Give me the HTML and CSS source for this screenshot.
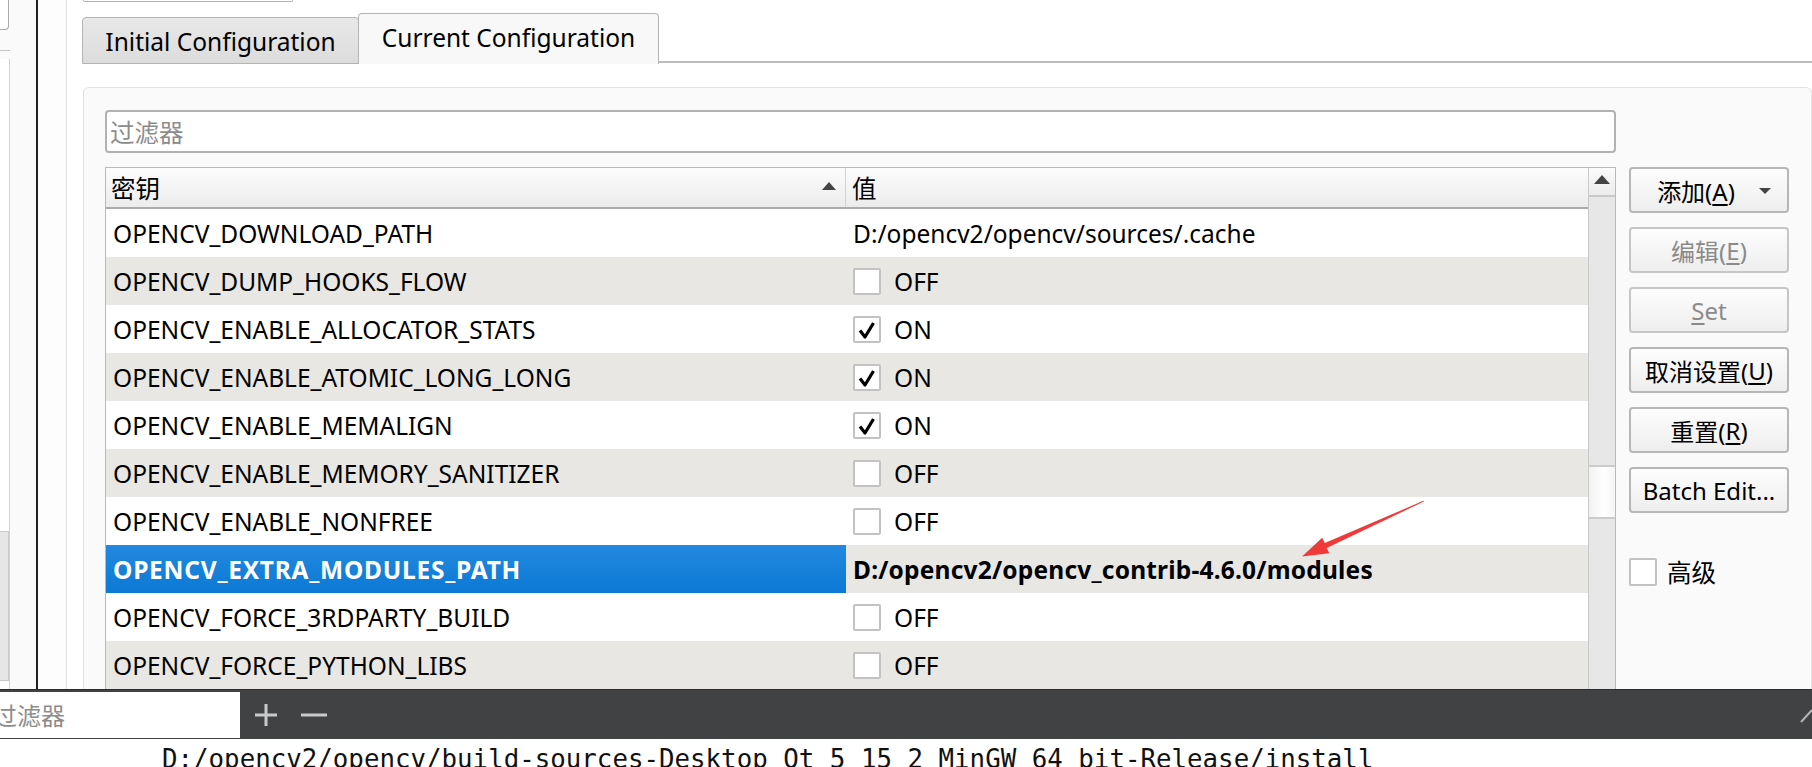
FILE: index.html
```html
<!DOCTYPE html>
<html lang="zh">
<head>
<meta charset="utf-8">
<title>CMake Configuration</title>
<link rel="stylesheet" href="styles.css">
</head>
<body>
<div class="main">
  <aside class="side">
    <div class="side-top"></div>
    <div class="side-sep"></div>
    <div class="side-list"><div class="side-block"></div></div>
  </aside>
  <div class="gutter"></div>
  <section class="content">
    <div class="topbox"></div>
    <div class="tabs">
      <div class="tab inactive">Initial Configuration</div>
      <div class="tab active">Current Configuration</div>
      <div class="tab-fill"></div>
    </div>
    <div class="panel">
      <div class="filter">过滤器</div>
      <div class="spacer"></div>
      <div class="table">
        <div class="grid">
          <div class="thead">
            <div class="th key"><span>密钥</span><svg class="sort" width="14" height="8" viewBox="0 0 14 8"><path d="M0 8 L7 0 L14 8 Z" fill="#444"/></svg></div>
            <div class="th val">值</div>
          </div>
          <div class="row"><div class="k">OPENCV_DOWNLOAD_PATH</div><div class="v">D:/opencv2/opencv/sources/.cache</div></div>
          <div class="row alt"><div class="k">OPENCV_DUMP_HOOKS_FLOW</div><div class="v"><span class="cb"></span>OFF</div></div>
          <div class="row"><div class="k">OPENCV_ENABLE_ALLOCATOR_STATS</div><div class="v"><span class="cb"><svg width="24" height="23" viewBox="0 0 24 23"><path d="M5 12.5 L10 19 L18.5 5" fill="none" stroke="#000" stroke-width="3.2" stroke-linejoin="round"/></svg></span>ON</div></div>
          <div class="row alt"><div class="k">OPENCV_ENABLE_ATOMIC_LONG_LONG</div><div class="v"><span class="cb"><svg width="24" height="23" viewBox="0 0 24 23"><path d="M5 12.5 L10 19 L18.5 5" fill="none" stroke="#000" stroke-width="3.2" stroke-linejoin="round"/></svg></span>ON</div></div>
          <div class="row"><div class="k">OPENCV_ENABLE_MEMALIGN</div><div class="v"><span class="cb"><svg width="24" height="23" viewBox="0 0 24 23"><path d="M5 12.5 L10 19 L18.5 5" fill="none" stroke="#000" stroke-width="3.2" stroke-linejoin="round"/></svg></span>ON</div></div>
          <div class="row alt"><div class="k">OPENCV_ENABLE_MEMORY_SANITIZER</div><div class="v"><span class="cb"></span>OFF</div></div>
          <div class="row"><div class="k">OPENCV_ENABLE_NONFREE</div><div class="v"><span class="cb"></span>OFF</div></div>
          <div class="row alt sel"><div class="k">OPENCV_EXTRA_MODULES_PATH</div><div class="v">D:/opencv2/opencv_contrib-4.6.0/modules</div></div>
          <div class="row"><div class="k">OPENCV_FORCE_3RDPARTY_BUILD</div><div class="v"><span class="cb"></span>OFF</div></div>
          <div class="row alt"><div class="k">OPENCV_FORCE_PYTHON_LIBS</div><div class="v"><span class="cb"></span>OFF</div></div>
        </div>
        <div class="vscroll">
          <div class="vs-up"><svg width="16" height="9" viewBox="0 0 16 9"><path d="M0 9 L8 0 L16 9 Z" fill="#444"/></svg></div>
          <div class="vs-thumb"></div>
        </div>
      </div>
      <div class="btns">
        <div class="btn drop"><span>添加(<span class="u">A</span>)</span><svg class="caret" width="12" height="6" viewBox="0 0 12 6"><path d="M0 0 L12 0 L6 6 Z" fill="#444"/></svg></div>
        <div class="btn dis">编辑(<span class="u">E</span>)</div>
        <div class="btn dis"><span class="u">S</span>et</div>
        <div class="btn">取消设置(<span class="u">U</span>)</div>
        <div class="btn">重置(<span class="u">R</span>)</div>
        <div class="btn">Batch Edit...</div>
        <div class="adv"><span class="cb big"></span>高级</div>
      </div>
    </div>
  </section>
</div>
<div class="bar">
  <div class="bar-input"><span>过滤器</span></div>
  <svg class="pm" width="24" height="24" viewBox="0 0 24 24"><path d="M12 1 V23 M1 12 H23" stroke="#c9c9c9" stroke-width="3"/></svg>
  <svg class="pm minus" width="26" height="24" viewBox="0 0 26 24"><path d="M0 12 H26" stroke="#c9c9c9" stroke-width="3"/></svg>
  <div class="bar-fill"></div>
  <svg class="grip" width="12" height="14" viewBox="0 0 12 14"><path d="M1 13 L12 1" stroke="#b5b5b5" stroke-width="2"/></svg>
</div>
<div class="path">D:/opencv2/opencv/build-sources-Desktop_Qt_5_15_2_MinGW_64_bit-Release/install</div>
<svg class="arrow" width="1812" height="767" viewBox="0 0 1812 767"><polygon points="1424,501.5 1326.7,547.9 1329.2,553.2 1302,556.5 1322.2,537.8 1324.8,543 1423.4,500.8" fill="#f03a3a"/></svg>
</body>
</html>
```

FILE: styles.css
```css
* { box-sizing: border-box; }
html, body { margin: 0; padding: 0; }
body {
  width: 1812px;
  height: 767px;
  overflow: hidden;
  background: #fff;
  font-family: "Noto Sans", "Noto Sans CJK SC", sans-serif;
  font-size: 24.5px;
  color: #000;
  position: relative;
}

.main { display: flex; height: 689px; overflow: hidden; }

.side {
  width: 38px;
  border-right: 2px solid #1f1f1f;
  background: #fafafa;
  display: flex;
  flex-direction: column;
}
.side-top {
  width: 9px; height: 30px; background: #fff;
  border-right: 1px solid #a9a9a9; border-bottom: 1px solid #a9a9a9;
  border-bottom-right-radius: 4px;
}
.side-sep { width: 10px; height: 1px; background: #c5c5c5; margin-top: 20px; }
.side-list {
  width: 10px; flex: 1; margin-top: 8px;
  border-right: 1px solid #d4d4d4; background: #fff;
  display: flex; flex-direction: column; justify-content: flex-end;
  padding-bottom: 8px;
}
.side-block { height: 150px; background: #e6e6e6; border: 1px solid #c9c9c9; border-left: none; }

.gutter { width: 29px; border-right: 1px solid #e2e2e2; background: #fdfdfd; }

.content { flex: 1; padding-left: 15px; display: flex; flex-direction: column; background: #fff; min-width: 0; }

.topbox {
  width: 210px; height: 2px; margin-left: 1px;
  border: 1px solid #b3b3b3; border-top: none;
  border-radius: 0 0 4px 4px;
}
.tabs { display: flex; align-items: flex-end; height: 51px; margin-top: 11px; }
.tab {
  height: 47px;
  border: 1px solid #b4b4b4;
  border-radius: 4px 4px 0 0;
  display: flex; align-items: center; justify-content: center;
  white-space: nowrap;
}
.tab.inactive {
  width: 277px;
  background: linear-gradient(#e8e8e8, #dcdcdc);
  padding-top: 1px;
}
.tab.active {
  width: 301px; height: 51px;
  background: #f8f8f8;
  border-bottom: none;
  margin-left: -1px;
  padding-bottom: 3px;
}
.tab-fill { flex: 1; border-bottom: 2px solid #bdbdbd; margin-bottom: 1px; }

.panel {
  margin-top: 23px; margin-left: 1px;
  flex: 1;
  border: 1px solid #e2e2e2; border-bottom: none;
  border-radius: 6px 6px 0 0;
  background: #fafafa;
  padding: 22px 21px 0 21px;
  display: grid;
  grid-template-columns: 1511px 160px;
  grid-template-rows: 43px 1fr;
  row-gap: 14px; column-gap: 13px;
  min-height: 0;
}
.filter {
  border: 2px solid #b2b2b2; border-radius: 4px;
  background: #fff; color: #8c8c8c;
  padding-left: 3px;
  display: flex; align-items: center;
}

.table {
  display: flex;
  border: 1px solid #b9b9b9; border-bottom: none;
  background: #fff;
  overflow: hidden;
}
.grid { flex: 1; min-width: 0; }
.thead {
  display: flex; height: 41px;
  border-bottom: 2px solid #ababab;
  background: linear-gradient(#fcfcfc, #ececec);
}
.th { display: flex; align-items: center; }
.th.key {
  width: 740px; padding-left: 5px; padding-right: 9px;
  border-right: 1px solid #d2d2d2;
  justify-content: space-between;
}
.th.val { padding-left: 6px; }
.sort { margin-top: -4px; }

.row { display: flex; height: 48px; background: #fff; }
.row.alt { background: #e8e7e4; }
.k, .v { display: flex; align-items: center; white-space: nowrap; }
.k { width: 740px; padding-left: 7px; }
.v { flex: 1; padding-left: 7px; }
.sel .k { background: linear-gradient(#2289df, #0c79d5); color: #fff; font-weight: bold; letter-spacing: 0.75px; }
.sel .v { font-weight: bold; letter-spacing: 0.2px; }

.cb {
  width: 28px; height: 27px; flex: none;
  border: 2px solid #c2c2c2; border-radius: 2px;
  background: #fff;
  margin-right: 13px;
  display: inline-flex; align-items: center; justify-content: center;
}
.cb svg { display: block; }

.vscroll {
  width: 27px; flex: none;
  border-left: 1px solid #c9c9c9;
  background: #e7e7e7;
  display: flex; flex-direction: column;
}
.vs-up {
  height: 29px;
  background: linear-gradient(#fbfbfb, #ececec);
  border-bottom: 2px solid #c9c9c9;
  display: flex; align-items: center; justify-content: center;
  padding-bottom: 4px;
}
.vs-thumb {
  height: 54px; margin-top: 268px;
  background: linear-gradient(to right, #f2f2f2, #ffffff 60%, #f4f4f4);
  border-top: 2px solid #cbcbcb; border-bottom: 2px solid #cbcbcb;
}

.btns { display: flex; flex-direction: column; gap: 14px; }
.btn {
  height: 46px; flex: none;
  border: 2px solid #b7b7b7; border-radius: 4px;
  background: linear-gradient(#fdfdfd, #eeeeee);
  display: flex; align-items: center; justify-content: center;
  font-size: 24px; white-space: nowrap;
}
.btn.dis { color: #8a8a8a; border-color: #c6c6c6; }
.u { text-decoration: underline; text-underline-offset: 3px; }
.btn.drop { position: relative; padding-right: 26px; }
.caret { position: absolute; right: 16px; top: 19px; }
.adv { margin-top: 27px; display: flex; align-items: center; }
.cb.big { width: 28px; height: 28px; margin-right: 10px; }

.bar {
  height: 50px;
  background: #414244;
  border-top: 1px solid #2c2c2c;
  display: flex; align-items: center;
}
.bar-input {
  width: 240px; height: 46px;
  background: #fff; color: #8c8c8c;
  display: flex; align-items: center;
  overflow: hidden;
}
.bar-input span { margin-left: -7px; font-size: 24px; }
.pm { margin-left: 14px; }
.pm.minus { margin-left: 23px; }
.bar-fill { flex: 1; }
.grip { align-self: flex-end; margin-bottom: 16px; }

.path {
  height: 28px;
  padding: 6px 0 0 162px;
  font-family: "DejaVu Sans Mono", monospace;
  font-size: 25.8px;
  line-height: 28px;
  white-space: nowrap;
  overflow: hidden;
  color: #111;
}

.arrow { position: absolute; left: 0; top: 0; pointer-events: none; }
```
